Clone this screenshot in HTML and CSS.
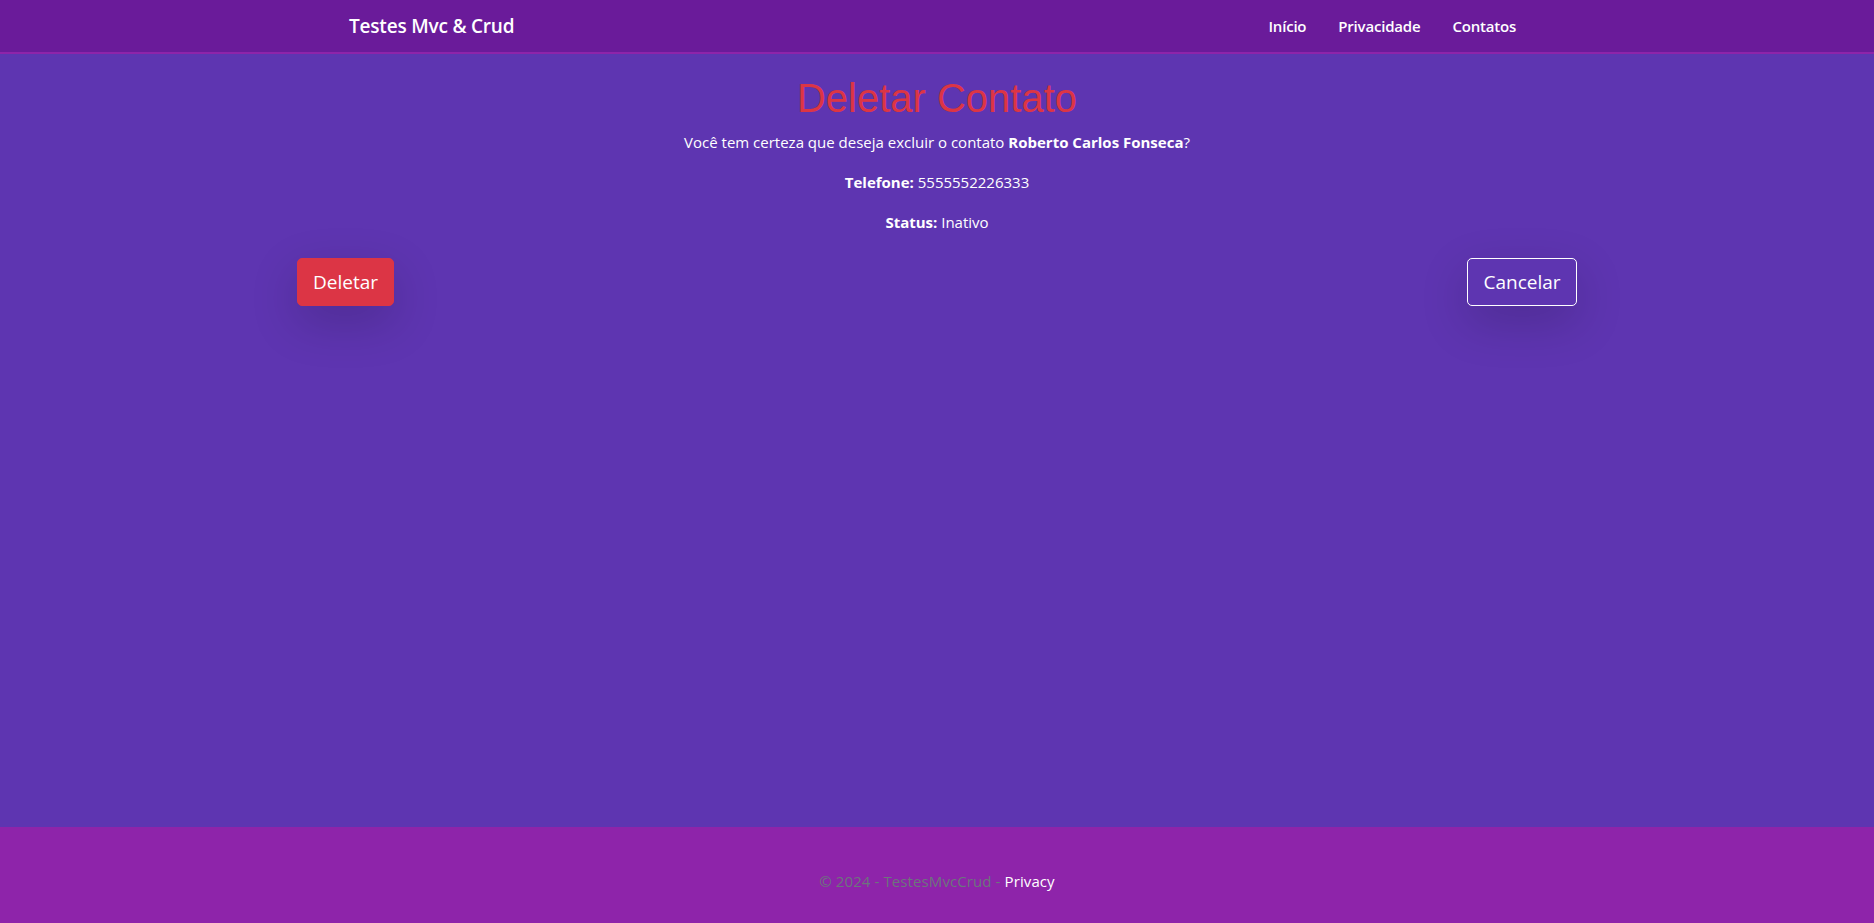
FILE: index.html
```html
<!DOCTYPE html>
<html lang="pt-BR">
<head>
<meta charset="utf-8">
<title>Deletar Contato - TestesMvcCrud</title>
<link rel="stylesheet" href="styles.css">
</head>
<body>
<header class="navbar">
  <div class="nav-inner">
    <a class="brand" href="#">Testes Mvc &amp; Crud</a>
    <nav class="nav-links">
      <a class="nav-link" href="#">Início</a>
      <a class="nav-link" href="#">Privacidade</a>
      <a class="nav-link" href="#">Contatos</a>
    </nav>
  </div>
</header>
<main class="main">
  <div class="container">
    <h1 class="title">Deletar Contato</h1>
    <p class="line">Você tem certeza que deseja excluir o contato <strong>Roberto Carlos Fonseca</strong>?</p>
    <p class="line"><strong>Telefone:</strong> 5555552226333</p>
    <p class="line"><strong>Status:</strong> Inativo</p>
    <div class="actions">
      <button class="btn btn-danger" type="button">Deletar</button>
      <a class="btn btn-outline" href="#">Cancelar</a>
    </div>
  </div>
</main>
<footer class="footer">
  <span class="muted">© 2024 - TestesMvcCrud - </span><a class="footer-link" href="#">Privacy</a>
</footer>
</body>
</html>
```

FILE: styles.css
```css
* { box-sizing: border-box; }
html, body { height: 100%; }
body {
  margin: 0;
  min-height: 100vh;
  display: flex;
  flex-direction: column;
  font-family: "Open Sans", "Noto Sans", sans-serif;
  font-size: 16px;
  line-height: 1.5;
  color: #fff;
  background: #5e35b1;
}
a { text-decoration: none; }

.navbar {
  background: #6a1b9a;
  border-bottom: 2px solid #8e24aa;
  height: 54px;
  flex: none;
}
.nav-inner {
  width: 1176px;
  margin: 0 auto;
  height: 52px;
  display: flex;
  align-items: center;
  justify-content: space-between;
}
.brand {
  color: #fff;
  font-size: 19px;
  font-weight: 600;
  letter-spacing: -0.2px;
}
.nav-links { display: flex; }
.nav-link {
  color: #fff;
  font-size: 15px;
  font-weight: 600;
  padding: 0 16px;
  letter-spacing: -0.2px;
}
.nav-link:last-child { padding-right: 9px; }

.main {
  flex: 1;
  background: #5e35b1;
  padding-top: 20px;
}
.container {
  width: 1280px;
  margin: 0 auto;
  text-align: center;
}
.title {
  margin: 0 0 8px;
  font-family: "Liberation Sans", Arial, sans-serif;
  font-weight: 400;
  font-size: 40px;
  line-height: 48px;
  color: #dc3545;
}
.line {
  margin: 0 0 16px;
  font-size: 15px;
  line-height: 24px;
}
.line strong { font-weight: 700; }
.actions {
  margin-top: 24px;
  display: flex;
  justify-content: space-between;
}
.btn {
  display: inline-block;
  height: 48px;
  padding: 0 15px;
  font-family: "Open Sans", "Noto Sans", sans-serif;
  font-size: 19px;
  line-height: 46px;
  border-radius: 5px;
  border: 1px solid transparent;
  color: #fff;
  box-shadow: 0 16px 48px rgba(0, 0, 0, 0.175);
  cursor: pointer;
}
.btn-danger {
  background: #dc3545;
  border-color: #dc3545;
  width: 97px;
}
.btn-outline {
  background: transparent;
  border-color: #fff;
  width: 110px;
}

.footer {
  flex: none;
  height: 96px;
  background: #8e24aa;
  text-align: center;
  padding-top: 42px;
  font-size: 15px;
  line-height: 24px;
  letter-spacing: 0.1px;
}
.muted { color: #6c757d; }
.footer-link { color: #fff; }
```
